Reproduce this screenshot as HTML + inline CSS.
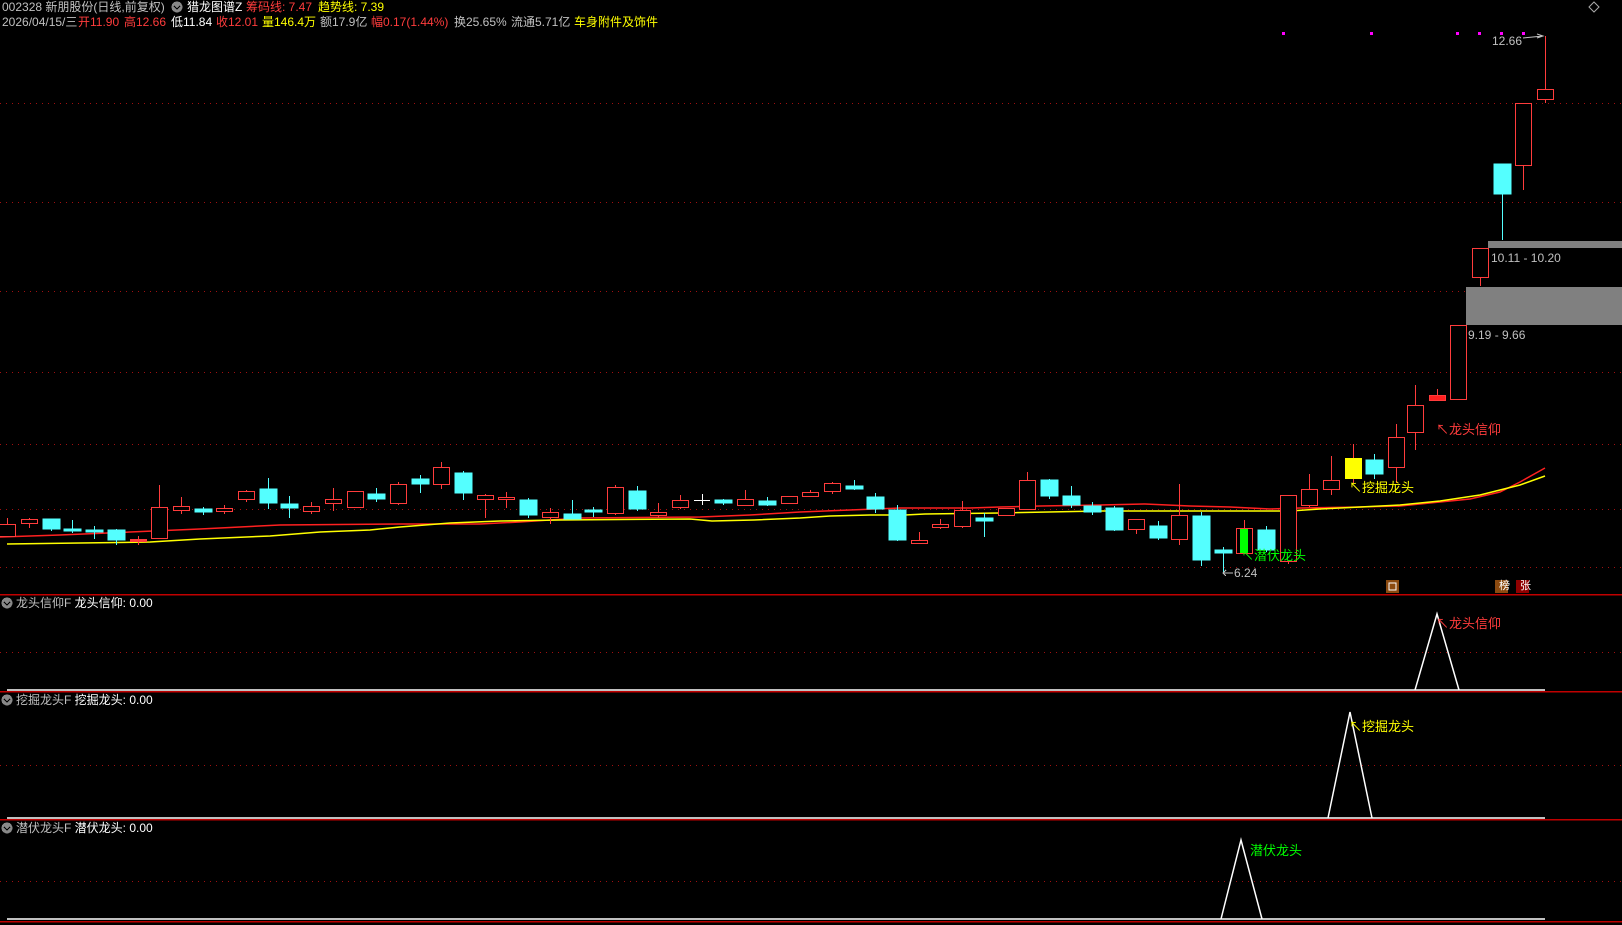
<!DOCTYPE html>
<html><head><meta charset="utf-8"><style>
body{margin:0;background:#000;width:1622px;height:925px;overflow:hidden;font-family:"Liberation Sans","Noto Sans CJK SC",sans-serif;}
.t{position:absolute;font-size:12px;line-height:14px;white-space:nowrap;color:#c0c0c0}
.r{color:#ff3c3c}.y{color:#ffff00}.w{color:#fff}.g{color:#c0c0c0}
</style></head><body>
<svg width="1622" height="925" style="position:absolute;left:0;top:0" shape-rendering="crispEdges">
<g stroke="#a01010" stroke-dasharray="1 5" stroke-width="1">
<line x1="0" y1="103.5" x2="1622" y2="103.5"/><line x1="0" y1="202.5" x2="1622" y2="202.5"/>
<line x1="0" y1="291.5" x2="1622" y2="291.5"/><line x1="0" y1="372.5" x2="1622" y2="372.5"/>
<line x1="0" y1="444.5" x2="1622" y2="444.5"/><line x1="0" y1="509.5" x2="1622" y2="509.5"/>
<line x1="0" y1="567.5" x2="1622" y2="567.5"/><line x1="0" y1="652.5" x2="1622" y2="652.5"/>
<line x1="0" y1="765.5" x2="1622" y2="765.5"/><line x1="0" y1="881.5" x2="1622" y2="881.5"/>
</g>
<g stroke="#c00000" stroke-width="1.5">
<line x1="0" y1="594.5" x2="1622" y2="594.5"/><line x1="0" y1="691.5" x2="1622" y2="691.5"/>
<line x1="0" y1="819.5" x2="1622" y2="819.5"/><line x1="0" y1="921.5" x2="1622" y2="921.5"/>
</g>
<rect x="1488" y="241" width="134" height="7" fill="#808080"/>
<rect x="1466" y="287" width="156" height="38" fill="#808080"/>
<polyline fill="none" stroke="#ff2020" stroke-width="1.5" shape-rendering="auto" points="0,537 60,535 130,532 200,529 280,525 400,524 480,524 520,522 580,518 700,517 750,515 800,512 850,510 900,508 970,508 1000,507 1040,506 1100,505 1145,504 1190,506 1230,507 1270,509 1300,508 1360,507 1400,506 1430,503 1470,499 1500,492 1520,482 1545,468"/>
<polyline fill="none" stroke="#ffff00" stroke-width="1.5" shape-rendering="auto" points="7,544 80,543 150,542 200,539 270,536 320,532 370,530 400,527 450,523 500,521 560,520 690,519 712,521 754,520 800,518 830,516 870,515 905,515 925,514 1000,513 1100,511 1290,511 1320,509 1360,507 1400,505 1440,501 1480,495 1520,485 1545,476"/>
<g id="red" stroke="#ff3c3c" fill="#000" stroke-width="1">
<path d="M7.5 518V537M29.5 518V528M138.5 536V545M159.5 485V539M181.5 497V514M224.5 505V514M246.5 490V502M311.5 502V514M333.5 488V511M398.5 482V505M441.5 462V489M485.5 494V518M506.5 492V508M550.5 508V524M615.5 485V515M658.5 503V518M680.5 495V509M745.5 490V505M810.5 490V496M832.5 482V494M919.5 532V544M940.5 519V529M962.5 501V528M1027.5 472V509M1136.5 519V534M1179.5 484V545M1244.5 520V553M1288.5 495V564M1309.5 474V507M1331.5 456V495M1353.5 444V483M1396.5 424V483M1415.5 385V450M1437.5 389V400M1480.5 248V286M1523.5 103V190M1545.5 36V103"/>
<rect x="-0.5" y="524.5" width="16" height="12"/><rect x="21.5" y="519.5" width="16" height="4"/>
<rect x="151.5" y="507.5" width="16" height="31"/><rect x="173.5" y="506.5" width="16" height="4"/>
<rect x="216.5" y="508.5" width="16" height="3"/><rect x="238.5" y="491.5" width="16" height="8"/>
<rect x="303.5" y="506.5" width="16" height="5"/><rect x="325.5" y="499.5" width="16" height="4"/>
<rect x="347.5" y="491.5" width="16" height="16"/><rect x="390.5" y="484.5" width="16" height="19"/>
<rect x="433.5" y="467.5" width="16" height="17"/><rect x="477.5" y="495.5" width="16" height="4"/>
<rect x="498.5" y="497.5" width="16" height="2"/><rect x="542.5" y="512.5" width="16" height="5"/>
<rect x="607.5" y="487.5" width="16" height="26"/><rect x="650.5" y="512.5" width="16" height="3"/>
<rect x="672.5" y="500.5" width="16" height="7"/><rect x="737.5" y="499.5" width="16" height="6"/>
<rect x="781.5" y="496.5" width="16" height="7"/><rect x="802.5" y="492.5" width="16" height="4"/>
<rect x="824.5" y="483.5" width="16" height="8"/><rect x="911.5" y="540.5" width="16" height="3"/>
<rect x="932.5" y="524.5" width="16" height="3"/><rect x="954.5" y="510.5" width="16" height="16"/>
<rect x="998.5" y="508.5" width="16" height="7"/><rect x="1019.5" y="480.5" width="16" height="29"/>
<rect x="1128.5" y="519.5" width="16" height="10"/><rect x="1171.5" y="515.5" width="16" height="24"/>
<rect x="1236.5" y="528.5" width="16" height="25"/><rect x="1280.5" y="495.5" width="16" height="66"/>
<rect x="1301.5" y="489.5" width="16" height="16"/><rect x="1323.5" y="480.5" width="16" height="9"/>
<rect x="1388.5" y="437.5" width="16" height="30"/><rect x="1407.5" y="405.5" width="16" height="27"/>
<rect x="1450.5" y="325.5" width="16" height="74"/><rect x="1472.5" y="248.5" width="16" height="29"/>
<rect x="1515.5" y="103.5" width="16" height="62"/><rect x="1537.5" y="89.5" width="16" height="10"/>
<rect x="130.5" y="539.5" width="16" height="2" fill="#ff3c3c"/><rect x="1429.5" y="395.5" width="16" height="5" fill="#ff2020"/>
</g>
<rect x="1240" y="529" width="8" height="24" fill="#00ff00"/>
<rect x="1345" y="458" width="17" height="21" fill="#ffff00"/>
<g stroke="#54ffff" fill="#54ffff">
<path d="M51.5 519V531M72.5 520V533M94.5 526V539M116.5 529V545M203.5 507V515M268.5 478V509M289.5 496V518M376.5 488V502M420.5 475V493M463.5 471V500M528.5 498V518M572.5 500V519M593.5 507V517M637.5 486V511M723.5 499V505M767.5 497V506M854.5 480V490M875.5 493V513M897.5 505V541M984.5 513V537M1049.5 479V499M1071.5 486V508M1092.5 502V515M1114.5 506V531M1158.5 521V540M1201.5 512V566M1223.5 547V572M1266.5 526V552M1374.5 454V479M1502.5 164V240"/>
<rect x="43" y="519" width="17" height="10"/><rect x="64" y="529" width="17" height="2"/>
<rect x="86" y="530" width="17" height="2"/><rect x="108" y="530" width="17" height="10"/>
<rect x="195" y="509" width="17" height="3"/><rect x="260" y="489" width="17" height="14"/>
<rect x="281" y="504" width="17" height="4"/><rect x="368" y="494" width="17" height="5"/>
<rect x="412" y="479" width="17" height="5"/><rect x="455" y="473" width="17" height="20"/>
<rect x="520" y="500" width="17" height="15"/><rect x="564" y="514" width="17" height="5"/>
<rect x="585" y="510" width="17" height="2"/><rect x="629" y="491" width="17" height="18"/>
<rect x="715" y="500" width="17" height="3"/><rect x="759" y="501" width="17" height="4"/>
<rect x="846" y="486" width="17" height="3"/><rect x="867" y="497" width="17" height="12"/>
<rect x="889" y="510" width="17" height="30"/><rect x="976" y="518" width="17" height="3"/>
<rect x="1041" y="480" width="17" height="16"/><rect x="1063" y="496" width="17" height="9"/>
<rect x="1084" y="506" width="17" height="6"/><rect x="1106" y="508" width="17" height="22"/>
<rect x="1150" y="526" width="17" height="12"/><rect x="1193" y="516" width="17" height="44"/>
<rect x="1215" y="550" width="17" height="3"/><rect x="1258" y="530" width="17" height="20"/>
<rect x="1366" y="460" width="17" height="14"/><rect x="1494" y="164" width="17" height="30"/>
</g>
<path d="M702.5 494V505M694 500.5H710" stroke="#fff"/>
<g fill="#ff00ff"><rect x="1282" y="32" width="3" height="3"/><rect x="1370" y="32" width="3" height="3"/><rect x="1456" y="32" width="3" height="3"/><rect x="1478" y="32" width="3" height="3"/><rect x="1500" y="32" width="3" height="3"/><rect x="1522" y="32" width="3" height="3"/></g>
<path d="M1523 38 L1543 36 M1537 34 L1543 36 L1537 38" stroke="#c0c0c0" fill="none" shape-rendering="auto"/>
<path d="M1223 573H1233M1226 570L1223 573L1226 576" stroke="#c0c0c0" fill="none"/>
<rect x="1386" y="580" width="13" height="13" fill="#8b4a10"/><rect x="1389" y="583" width="7" height="7" fill="none" stroke="#fff"/>
<rect x="1495" y="580" width="13" height="13" fill="#8b4a10"/>
<rect x="1516" y="580" width="13" height="13" fill="#900000"/>
<g stroke="#fff" stroke-width="1.5" fill="none" shape-rendering="auto">
<line x1="7" y1="690" x2="1545" y2="690"/><line x1="7" y1="818" x2="1545" y2="818"/><line x1="7" y1="919" x2="1545" y2="919"/>
<polyline points="1415,690 1437,614 1459,690"/>
<polyline points="1328,818 1350,712 1372,818"/>
<polyline points="1221,919 1241,840 1262,919"/>
</g>
<g fill="#888"><circle cx="177" cy="7" r="5.5"/><circle cx="7" cy="603" r="5.5"/><circle cx="7" cy="700" r="5.5"/><circle cx="7" cy="828" r="5.5"/></g>
<g stroke="#000" fill="none" stroke-width="1.3"><path d="M174 6L177 9L180 6"/><path d="M4 602L7 605L10 602"/><path d="M4 699L7 702L10 699"/><path d="M4 827L7 830L10 827"/></g>
<path d="M1594 2L1599 7L1594 12L1589 7Z" fill="none" stroke="#aaa" shape-rendering="auto"/>
</svg>
<div class="t g" style="left:2px;top:0">002328 新朋股份(日线,前复权)</div>
<div class="t w" style="left:187px;top:0">猎龙图谱Z</div>
<div class="t r" style="left:246px;top:0">筹码线: 7.47</div>
<div class="t y" style="left:318px;top:0">趋势线: 7.39</div>
<div class="t g" style="left:2px;top:15px">2026/04/15/三</div>
<div class="t r" style="left:78px;top:15px">开11.90</div>
<div class="t r" style="left:124px;top:15px">高12.66</div>
<div class="t w" style="left:171px;top:15px">低11.84</div>
<div class="t r" style="left:216px;top:15px">收12.01</div>
<div class="t y" style="left:262px;top:15px">量146.4万</div>
<div class="t g" style="left:320px;top:15px">额17.9亿</div>
<div class="t r" style="left:371px;top:15px">幅0.17(1.44%)</div>
<div class="t g" style="left:454px;top:15px">换25.65%</div>
<div class="t g" style="left:511px;top:15px">流通5.71亿</div>
<div class="t y" style="left:574px;top:15px">车身附件及饰件</div>
<div class="t g" style="left:1492px;top:34px">12.66</div>
<div class="t g" style="left:1491px;top:251px">10.11 - 10.20</div>
<div class="t g" style="left:1468px;top:328px">9.19 - 9.66</div>
<div class="t g" style="left:1234px;top:566px">6.24</div>
<div class="t r" style="left:1436px;top:423px;font-size:13px">↖龙头信仰</div>
<div class="t y" style="left:1349px;top:481px;font-size:13px">↖挖掘龙头</div>
<div class="t" style="left:1241px;top:549px;font-size:13px;color:#00ff00">↖潜伏龙头</div>
<div class="t w" style="left:1499px;top:579px;font-size:11px">榜</div>
<div class="t w" style="left:1520px;top:579px;font-size:11px">张</div>
<div class="t g" style="left:16px;top:596px">龙头信仰F <span class="w">龙头信仰: 0.00</span></div>
<div class="t g" style="left:16px;top:693px">挖掘龙头F <span class="w">挖掘龙头: 0.00</span></div>
<div class="t g" style="left:16px;top:821px">潜伏龙头F <span class="w">潜伏龙头: 0.00</span></div>
<div class="t r" style="left:1436px;top:617px;font-size:13px">↖龙头信仰</div>
<div class="t y" style="left:1349px;top:720px;font-size:13px">↖挖掘龙头</div>
<div class="t" style="left:1250px;top:844px;font-size:13px;color:#00ff00">潜伏龙头</div>
</body></html>
